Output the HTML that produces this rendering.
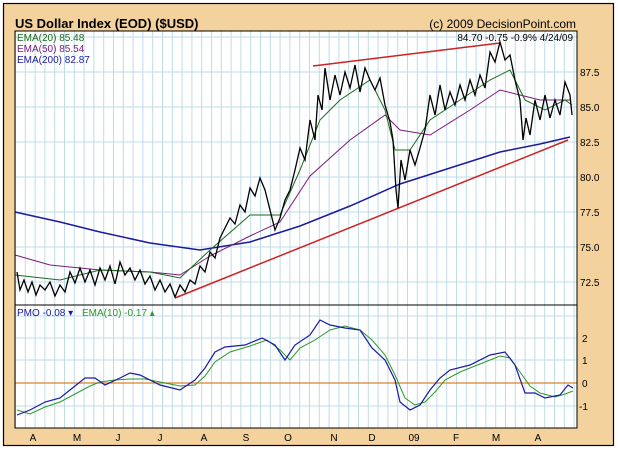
<!DOCTYPE html>
<html><head><meta charset="utf-8"><style>
html,body{margin:0;padding:0;background:#fff;}
svg{display:block;font-family:"Liberation Sans",sans-serif;}
</style></head><body>
<svg width="618" height="450" viewBox="0 0 618 450" xmlns="http://www.w3.org/2000/svg">
<defs>
<pattern id="gv" x="15" y="0" width="9.8" height="450" patternUnits="userSpaceOnUse">
<line x1="0.5" y1="0" x2="0.5" y2="450" stroke="#bfdbe8" stroke-width="1"/>
</pattern>
</defs>
<rect x="0" y="0" width="618" height="450" fill="#fff"/>
<rect x="3.5" y="3.5" width="610" height="442" fill="#f4d29e" stroke="#000" stroke-width="1.2"/>
<text x="15" y="28" font-size="13" font-weight="bold" fill="#000">US Dollar Index (EOD) ($USD)</text>
<text x="576" y="28" font-size="12" fill="#000" text-anchor="end">(c) 2009 DecisionPoint.com</text>
<rect x="15" y="31" width="562" height="274" fill="#fff"/>
<rect x="15" y="31" width="562" height="274" fill="url(#gv)"/>
<g stroke="#bfdbe8" stroke-width="1">
<line x1="15" y1="72" x2="577" y2="72"/><line x1="15" y1="107" x2="577" y2="107"/>
<line x1="15" y1="142" x2="577" y2="142"/><line x1="15" y1="177" x2="577" y2="177"/>
<line x1="15" y1="212" x2="577" y2="212"/><line x1="15" y1="247" x2="577" y2="247"/>
<line x1="15" y1="282" x2="577" y2="282"/><line x1="15" y1="37" x2="577" y2="37"/>
</g>
<rect x="15" y="305" width="562" height="123" fill="#fff"/>
<rect x="15" y="305" width="562" height="123" fill="url(#gv)"/>
<g stroke="#bfdbe8" stroke-width="1">
<line x1="15" y1="338" x2="577" y2="338"/><line x1="15" y1="360" x2="577" y2="360"/>
<line x1="15" y1="406" x2="577" y2="406"/><line x1="15" y1="316" x2="577" y2="316"/>
</g>
<line x1="15" y1="383" x2="577" y2="383" stroke="#d9822b" stroke-width="1.2"/>
<polyline fill="none" stroke="#1a1aa0" stroke-width="1.5" points="15,212 60,222 100,232 150,243 200,250 250,242 300,226 350,206 400,184 450,168 500,152 540,144 570,137"/>
<polyline fill="none" stroke="#7a1a7a" stroke-width="1" points="15,255 50,265 100,270 150,272 180,275 210,256 250,236 280,222 310,176 350,140 385,115 400,130 430,135 470,110 500,90 520,95 540,100 570,100"/>
<polyline fill="none" stroke="#1a6a1a" stroke-width="1" points="15,275 60,280 100,270 150,272 180,278 210,250 250,215 280,215 300,170 320,120 340,100 370,80 385,110 395,150 410,150 430,120 460,100 490,80 510,70 525,100 545,110 565,100 572,105"/>
<line x1="175" y1="298" x2="568" y2="140" stroke="#cc2222" stroke-width="1.5"/>
<line x1="313" y1="66" x2="500" y2="43" stroke="#cc2222" stroke-width="1.5"/>
<polyline fill="none" stroke="#000" stroke-width="1.3" points="17,272 20,290 24,280 28,292 32,282 36,295 40,285 45,290 50,282 55,296 60,285 65,292 70,272 75,283 80,268 85,282 90,270 95,285 100,268 105,280 110,266 115,284 120,262 125,275 130,268 135,280 140,270 145,284 150,276 155,290 160,280 165,292 170,284 175,297 180,285 185,292 190,280 195,284 200,266 205,272 210,252 215,258 220,238 225,228 230,218 235,224 240,205 245,212 250,188 255,196 260,178 265,190 270,210 275,230 280,218 285,200 290,190 295,170 300,148 305,160 310,120 315,140 318,95 322,110 325,68 330,100 335,75 340,95 345,72 350,88 355,65 360,92 365,68 370,80 375,90 380,78 385,105 390,122 393,140 396,190 398,208 401,160 405,180 410,150 415,165 420,148 425,130 430,95 435,115 440,85 445,110 450,92 455,105 460,85 465,100 470,80 475,95 480,75 485,88 490,52 495,62 500,42 505,60 510,55 515,80 520,100 523,140 526,118 530,135 535,100 540,120 545,95 550,118 555,100 560,115 565,82 570,95 572,115"/>
<polyline fill="none" stroke="#2a9a2a" stroke-width="1" points="17,410 30,414 45,407 60,402 75,394 90,386 100,382 115,380 130,379 145,379 160,382 180,386 195,385 205,376 215,362 230,352 250,346 267,340 280,350 290,360 300,348 315,340 330,330 345,326 360,330 372,340 385,355 395,375 405,398 415,405 425,402 435,392 445,380 460,372 480,364 500,356 510,358 520,372 530,386 540,393 555,397 565,394 573,391"/>
<polyline fill="none" stroke="#1a1aa8" stroke-width="1.2" points="17,415 30,410 45,402 60,398 75,386 85,378 95,378 105,385 120,378 130,373 140,375 160,385 180,390 195,380 205,368 215,352 225,347 245,345 262,338 275,345 285,360 295,345 310,335 320,320 330,325 345,328 360,330 372,348 385,360 395,380 400,402 410,410 420,405 430,390 440,378 450,370 470,365 490,355 505,352 515,365 525,393 535,393 545,398 560,395 568,385 573,388"/>
<rect x="15" y="31" width="562" height="274" fill="none" stroke="#000" stroke-width="1"/>
<rect x="15" y="305" width="562" height="123" fill="none" stroke="#000" stroke-width="1"/>
<g font-size="10">
<text x="17" y="41" fill="#1a6a1a">EMA(20) 85.48</text>
<text x="17" y="52" fill="#7a1a7a">EMA(50) 85.54</text>
<text x="17" y="63" fill="#1a1aa0">EMA(200) 82.87</text>
<text x="573" y="41" fill="#000" text-anchor="end">84.70  -0.75  -0.9%  4/24/09</text>
<text x="17" y="316" fill="#1a1aa0">PMO  -0.08 ▾</text>
<text x="82" y="316" fill="#2a9a2a">EMA(10)  -0.17 ▴</text>
</g>
<g font-size="10" fill="#000">
<text x="580" y="76">87.5</text><text x="580" y="111">85.0</text><text x="580" y="146">82.5</text>
<text x="580" y="181">80.0</text><text x="580" y="216">77.5</text><text x="580" y="251">75.0</text>
<text x="580" y="286">72.5</text>
<text x="582" y="342">2</text><text x="582" y="364">1</text><text x="582" y="387">0</text><text x="579" y="410">-1</text>
</g>
<g font-size="10" fill="#000" text-anchor="middle">
<text x="33" y="441">A</text><text x="77" y="441">M</text><text x="118" y="441">J</text><text x="160" y="441">J</text>
<text x="204" y="441">A</text><text x="246" y="441">S</text><text x="288" y="441">O</text><text x="334" y="441">N</text>
<text x="372" y="441">D</text><text x="414" y="441">09</text><text x="456" y="441">F</text><text x="496" y="441">M</text>
<text x="538" y="441">A</text>
</g>
</svg>
</body></html>
